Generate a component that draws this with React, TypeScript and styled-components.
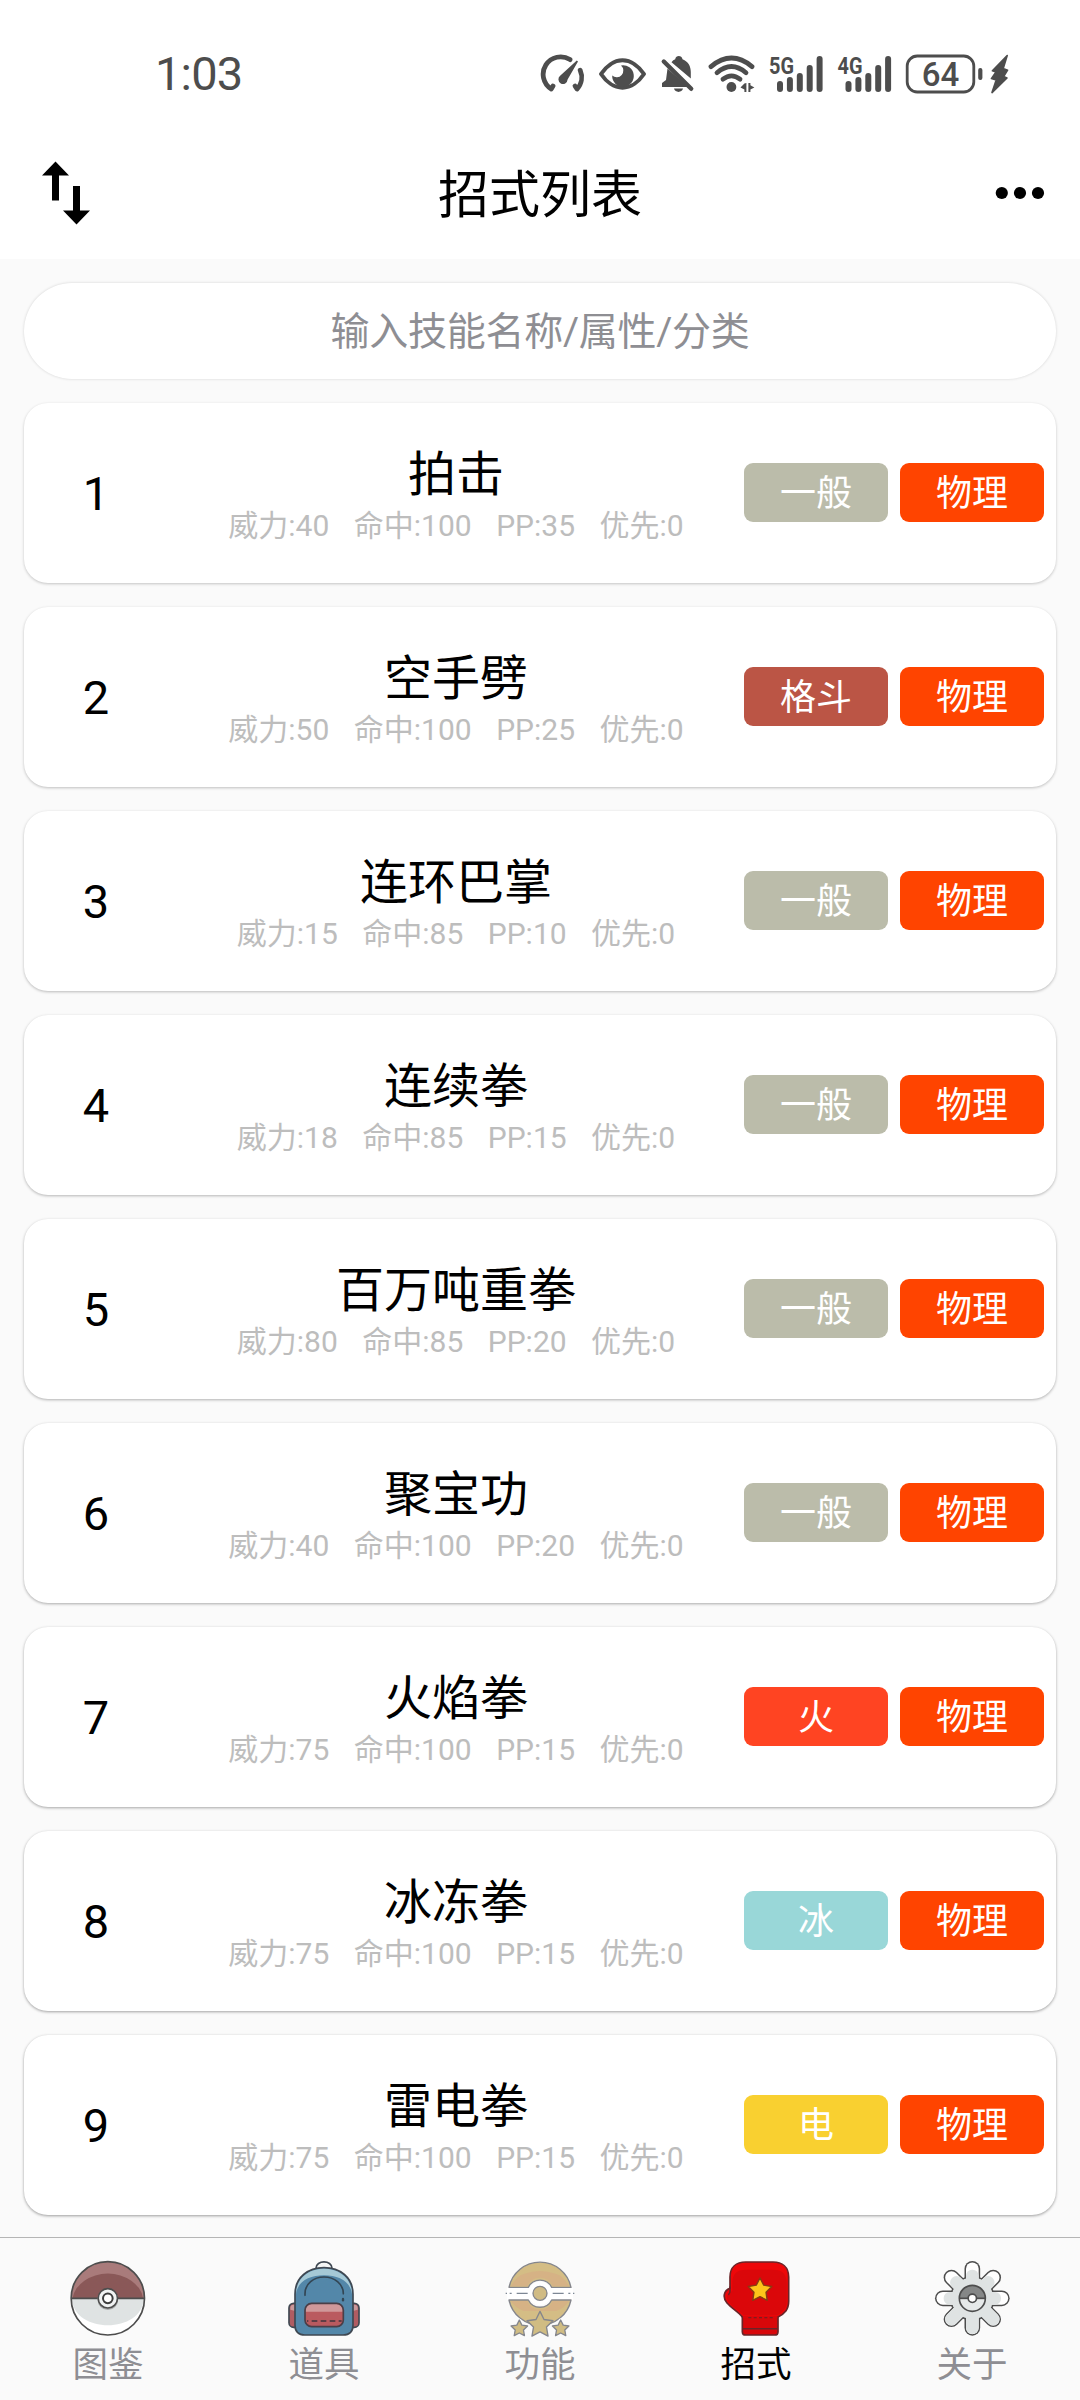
import React from 'react';
import styled, { createGlobalStyle } from 'styled-components';

const GlobalStyle = createGlobalStyle`
  *, *::before, *::after { box-sizing: border-box; }
  body {
    margin: 0;
    background: #fafafa;
    font-family: Roboto, "Noto Sans CJK SC", sans-serif;
    color: #000;
  }
`;

const Screen = styled.div`
  width: 1080px;
  height: 2400px;
  display: flex;
  flex-direction: column;
  background: #fafafa;
  overflow: hidden;
`;

const Header = styled.header`
  height: 259px;
  flex: none;
  display: flex;
  flex-direction: column;
  background: #fff;
`;

const StatusBar = styled.div`
  height: 127px;
  padding: 20px 70px 0 155px;
  display: flex;
  align-items: center;
  justify-content: space-between;
  color: #4d4d4d;
`;

const Clock = styled.span`
  font-size: 47px;
  line-height: 50px;
  letter-spacing: -0.8px;
`;

const StatusIcons = styled.svg`
  display: block;
  width: 470px;
  height: 44px;
`;

const TitleBar = styled.div`
  height: 132px;
  display: grid;
  grid-template-columns: 1fr auto 1fr;
  align-items: center;
  padding: 0 34px 0 34px;
`;

const IconButton = styled.button<{ $align: 'start' | 'end' }>`
  border: 0;
  padding: 0;
  background: none;
  display: flex;
  justify-self: ${(p) => p.$align};
`;

const PageTitle = styled.h1`
  margin: 5px 0 0;
  font-size: 51px;
  line-height: 60px;
  font-weight: 400;
`;

const Content = styled.main`
  flex: 1;
  min-height: 0;
  padding: 24px 24px 0;
  display: flex;
  flex-direction: column;
  gap: 24px;
`;

const SearchField = styled.div`
  height: 96px;
  flex: none;
  padding-top: 2px;
  border-radius: 48px;
  background: #fff;
  box-shadow: 0 0 3px rgba(0, 0, 0, 0.16);
  display: flex;
  align-items: center;
  justify-content: center;
  color: #8e8e93;
  font-size: 39px;
  line-height: 56px;
  letter-spacing: -0.25px;
`;

const Card = styled.article<{ $shade: number }>`
  height: 180px;
  flex: none;
  border-radius: 24px;
  background: #fff;
  box-shadow: 0 1px 3px rgba(0, 0, 0, ${(p) => p.$shade});
  display: grid;
  grid-template-columns: 144px 1fr 312px;
  align-items: center;
`;

const CardIndex = styled.span`
  padding-top: 2px;
  font-size: 47px;
  line-height: 56px;
  text-align: center;
`;

const MoveInfo = styled.div`
  padding-top: 8px;
  display: flex;
  flex-direction: column;
  align-items: center;
`;

const MoveName = styled.h2`
  margin: 0;
  font-size: 48px;
  line-height: 57px;
  font-weight: 400;
`;

const Stats = styled.div`
  display: flex;
  gap: 24.5px;
  color: #bdbdbd;
  font-size: 30px;
  line-height: 45px;
  white-space: nowrap;
`;

const Badges = styled.div`
  margin-bottom: 1px;
  display: flex;
  gap: 12px;
`;

const Badge = styled.span<{ $color: string }>`
  width: 144px;
  height: 59px;
  padding-top: 1px;
  border-radius: 9px;
  background: ${(p) => p.$color};
  color: #fff;
  font-size: 36px;
  line-height: 60px;
  text-align: center;
`;

const TabBar = styled.nav`
  height: 163px;
  flex: none;
  border-top: 1px solid #b5b5b5;
  background: #fafafa;
  display: grid;
  grid-template-columns: repeat(5, 1fr);
`;

const Tab = styled.div<{ $active?: boolean }>`
  padding-top: 23px;
  display: flex;
  flex-direction: column;
  align-items: center;
  color: ${(p) => (p.$active ? '#000' : '#8e8e93')};
  font-size: 35.5px;
  line-height: 58px;
`;

const TabIcon = styled.svg`
  display: block;
  width: 75px;
  height: 75px;
  overflow: visible;
`;

const starPoints = (cx: number, cy: number, r: number, inner = 0.5) =>
  Array.from({ length: 10 }, (_, i) => {
    const a = -Math.PI / 2 + (i * Math.PI) / 5;
    const d = i % 2 ? r * inner : r;
    return `${(cx + d * Math.cos(a)).toFixed(1)},${(cy + d * Math.sin(a)).toFixed(1)}`;
  }).join(' ');

const BAR_TOPS = [80, 76, 72, 64, 55];

function Signal({ x, label }: { x: number; label: string }) {
  return (
    <g>
      <text x={x - 11} y="73" fontSize="24" fontWeight="700" textLength="25" lengthAdjust="spacingAndGlyphs">
        {label}
      </text>
      {BAR_TOPS.map((top, i) => (
        <rect key={top} x={x - 3 + i * 9.9} y={top} width="6" height={91 - top} rx="3" />
      ))}
    </g>
  );
}

function SystemIcons() {
  return (
    <StatusIcons viewBox="540 51 470 44" fill="#4d4d4d" stroke="none" fontFamily="Roboto, sans-serif">
      <g fill="none" stroke="#4d4d4d" strokeWidth="4.8" strokeLinecap="round" strokeLinejoin="round">
        <path d="M570 58.6 A17.4 17.4 0 0 0 551.2 88 L553 85" />
        <path d="M580.2 69.2 A17.4 17.4 0 0 1 577 88 L575 85" />
      </g>
      <path d="M576.8 59.6 L578 60.4 L567.6 78.6 A4.6 4.6 0 1 1 560.4 74.6 Z" />
      <path
        d="M601 73 C606 65.5 614 59.3 622.5 59.3 C631 59.3 639 65.5 644 73 C639 80.5 631 86.7 622.5 86.7 C614 86.7 606 80.5 601 73 Z"
        fill="none"
        stroke="#4d4d4d"
        strokeWidth="4"
        strokeLinejoin="round"
      />
      <path d="M621 64.4 A10.8 10.8 0 1 1 612.2 74.6 A6.6 6.6 0 0 0 621 64.4 Z" />
      <path d="M667.5 67.5 L688 86 H662 V82 L666 79 Z" />
      <path d="M671.5 61.3 C672.5 59.5 674 58.6 675.2 58.2 C675.8 54 681.8 54 682.5 58.2 C688.3 60.8 690.8 65 690.8 71 V77.5 Z" />
      <path d="M663.8 60.5 L691.2 87.8" fill="none" stroke="#4d4d4d" strokeWidth="4.4" strokeLinecap="round" />
      <path d="M674 87.6 H683 C682 92 675 92 674 87.6 Z" />
      <g fill="none" stroke="#4d4d4d" strokeWidth="4.8" strokeLinecap="round">
        <path d="M711 65.6 Q731.5 48.6 752 65.6" />
        <path d="M717 71.8 Q731.5 59.4 746 71.8" />
        <path d="M723 78.2 Q731.5 71.6 740 78.2" />
      </g>
      <circle cx="731.4" cy="86" r="4.9" />
      <path d="M746.4 82 V91 H744.4 V88.4 L740.5 86.6 L744.4 82.6 Z M748.4 82 H750.4 V84.3 L754.4 86.6 L750.4 88.6 V91 H748.4 Z" />
      <Signal x={780} label="5G" />
      <Signal x={848.5} label="4G" />
      <rect x="907.2" y="55" width="66.6" height="36" rx="10" fill="none" stroke="#4d4d4d" strokeWidth="2.8" />
      <text x="940.5" y="84.8" fontSize="33" fontWeight="500" textAnchor="middle">
        64
      </text>
      <rect x="978.2" y="67" width="4.2" height="12" rx="2" />
      <path
        d="M1007.2 54.5 L992.4 69.8 L996 71 L991.4 77.6 L996.2 79 L992 91.6 L1007 77 L1003.6 75.6 L1007.6 69.2 L1003.2 67.6 Z"
        stroke="#4d4d4d"
        strokeWidth="1.6"
        strokeLinejoin="round"
      />
    </StatusIcons>
  );
}

function BallIcon() {
  return (
    <TabIcon viewBox="1.5 0 225 225">
      <circle cx="112" cy="112" r="110" fill="#fff" />
      <path d="M2 112 A110 110 0 0 1 222 112 Z" fill="#a97b7b" />
      <path d="M6 112 A107 86 0 0 1 218 112 Z" fill="#8a5858" />
      <path d="M4 112 H220 C216 220 8 220 4 112 Z" fill="#dfe3e3" />
      <path d="M2 112 H222" stroke="#4d4d4d" strokeWidth="5" />
      <circle cx="112" cy="112" r="110" fill="none" stroke="#4d4d4d" strokeWidth="5" />
      <circle cx="112" cy="116" r="31" fill="#a9abab" />
      <circle cx="112" cy="112" r="29" fill="#f1f3f3" stroke="#4d4d4d" strokeWidth="5" />
      <circle cx="112" cy="112" r="14.5" fill="#fff" stroke="#3d3d3d" strokeWidth="6" />
    </TabIcon>
  );
}

function BackpackIcon() {
  return (
    <TabIcon viewBox="0 0 225 225">
      <g stroke="#3f4852" strokeWidth="5" strokeLinecap="round" strokeLinejoin="round">
        <path d="M87 27 V22 C87 -4 135 -4 135 22 V27" fill="#f4f5f5" />
        <rect x="6" y="127" width="36" height="72" rx="14" fill="#b05c62" />
        <rect x="180" y="127" width="36" height="72" rx="14" fill="#b05c62" />
        <path d="M10 146 V141 Q10 131 20 131 H24 V150 Z M212 146 V141 Q212 131 202 131 H198 V150 Z" fill="#c9999b" stroke="none" />
        <path
          d="M24 100 C24 48 64 20 111 20 C158 20 198 48 198 100 V192 Q198 222 168 222 H54 Q24 222 24 192 Z"
          fill="#5387a9"
        />
      </g>
      <path
        d="M27 100 C27 50 66 23 111 23 C156 23 195 50 195 100 C190 60 154 43 111 43 C68 43 32 60 27 100 Z"
        fill="#a5c9d6"
      />
      <g fill="none" stroke="#334654" strokeWidth="5" strokeLinecap="round">
        <path d="M54 103 V98 C54 68 80 48 111 48 C142 48 169 68 169 98" />
        <path d="M168 114 V118" strokeWidth="7" />
      </g>
      <rect x="54" y="127" width="115" height="70" rx="20" fill="#ba5a5f" />
      <path d="M56 152 V147 Q56 129 74 129 H149 Q167 129 167 147 V152 Z" fill="#cf989a" />
      <path d="M60 180 H164" stroke="#40353e" strokeWidth="5" strokeDasharray="17 10" strokeDashoffset="-14" />
      <rect x="54" y="127" width="115" height="70" rx="20" fill="none" stroke="#4a3f48" strokeWidth="5" />
    </TabIcon>
  );
}

function TrophyIcon() {
  return (
    <TabIcon viewBox="0 0 225 225">
      <rect x="12" y="80" width="198" height="37" fill="#fff" />
      <g fill="#d4bd85" stroke="#85868c" strokeWidth="4" strokeLinejoin="round">
        <path d="M18 79 A95 95 0 0 1 204 79 H146 A39 39 0 0 0 76 79 Z" />
        <path d="M18 117 A95 95 0 0 0 204 117 H146 A39 39 0 0 1 76 117 Z" />
      </g>
      <path d="M24 76 Q40 44 64 38 Q110 22 158 38 Q182 44 198 76 H149 A41 41 0 0 0 73 76 Z" fill="#d6b285" />
      <path d="M24 120 H73 A41 41 0 0 0 149 120 H198 Q186 140 160 150 H62 Q36 140 24 120 Z" fill="#d6b285" />
      <circle cx="111" cy="97" r="35" fill="#fff" />
      <circle cx="111" cy="97" r="21" fill="#d0bb84" stroke="#85868c" strokeWidth="4" />
      <g stroke="#7d8795" strokeWidth="4">
        <path d="M41 97 H74 M149 97 H182" />
        <path d="M8 97 H12 M20 97 H26 M196 97 H202 M210 97 H214" strokeWidth="3.5" />
      </g>
      <g strokeLinejoin="round">
        <g fill="#fff" stroke="#fafafa" strokeWidth="14">
          <polygon points={starPoints(49, 204, 24)} />
          <polygon points={starPoints(173, 204, 24)} />
        </g>
        <g fill="#d0bc83" stroke="#85868c" strokeWidth="4">
          <polygon points={starPoints(111, 192, 41)} />
          <polygon points={starPoints(49, 203, 26)} />
          <polygon points={starPoints(173, 203, 26)} />
        </g>
      </g>
    </TabIcon>
  );
}

function GloveIcon() {
  return (
    <TabIcon viewBox="0 0 225 225">
      <g stroke="#6b2428" strokeWidth="5" strokeLinejoin="round">
        <path d="M70 158 H177 V212 Q177 222 167 222 H80 Q70 222 70 212 Z" fill="#d8070a" />
        <path
          d="M33 82 V48 C33 18 52 3 80 3 H162 C190 3 209 18 209 48 V120 C209 146 197 158 177 168 H70 C58 152 38 142 24 126 C10 110 14 88 33 82 Z"
          fill="#ee0709"
        />
      </g>
      <path
        d="M40 62 C42 34 58 26 84 26 H160 C186 26 200 34 203 62 V120 C203 144 190 154 175 162 H74 C60 148 42 138 28 122 C20 110 24 96 40 90 Z"
        fill="#db070a"
      />
      <path d="M33 78 V90 Q33 97 29 100" fill="none" stroke="#6b2428" strokeWidth="4.5" strokeLinecap="round" />
      <path d="M72 168 H175" stroke="#db070a" strokeWidth="7" />
      <path d="M88 170 H162" stroke="#7d1c20" strokeWidth="4" strokeDasharray="9 7" />
      <path d="M70 203 H177" stroke="#6b2428" strokeWidth="4.5" />
      <polygon
        points={starPoints(123, 88, 37, 0.52)}
        fill="#fdc41a"
        stroke="#8a3a12"
        strokeWidth="4.5"
        strokeLinejoin="round"
      />
    </TabIcon>
  );
}

const PETALS = [0, 45, 90, 135];

function GearIcon() {
  return (
    <TabIcon viewBox="0 0 225 225">
      <g fill="#4d4d4d">
        {PETALS.map((a) => (
          <rect key={a} x="88.5" y="0" width="47" height="224" rx="23.5" transform={`rotate(${a} 112 112)`} />
        ))}
        <circle cx="112" cy="112" r="67" />
      </g>
      <g fill="#fff">
        {PETALS.map((a) => (
          <rect key={a} x="93" y="4.5" width="38" height="215" rx="19" transform={`rotate(${a} 112 112)`} />
        ))}
      </g>
      <g fill="#dfe3e3">
        <circle cx="112" cy="112" r="62.5" />
        {[0, 45, 90, 135, 180, 225, 270, 315].map((a) => (
          <rect
            key={a}
            x="93"
            y={a > 90 && a < 270 ? 5 : 26}
            width="38"
            height="70"
            rx="18"
            transform={`rotate(${a} 112 112)`}
          />
        ))}
      </g>
      <circle cx="112" cy="112" r="39" fill="#e6e9e9" />
      <path d="M73 112 A39 39 0 0 1 151 112 Z" fill="#858787" />
      <path d="M73 112 H151" stroke="#4d4d4d" strokeWidth="5" />
      <circle cx="112" cy="112" r="39" fill="none" stroke="#4d4d4d" strokeWidth="5" />
      <circle cx="112" cy="112" r="12.5" fill="#fff" stroke="#4d4d4d" strokeWidth="5" />
    </TabIcon>
  );
}

const TYPE_COLORS: Record<string, string> = {
  一般: '#bbbcaa',
  格斗: '#bb5545',
  火: '#ff4422',
  冰: '#99d7d8',
  电: '#f9d030',
  物理: '#ff4400',
};

interface Move {
  name: string;
  power: number;
  accuracy: number;
  pp: number;
  type: string;
}

const MOVES: Move[] = [
  { name: '拍击', power: 40, accuracy: 100, pp: 35, type: '一般' },
  { name: '空手劈', power: 50, accuracy: 100, pp: 25, type: '格斗' },
  { name: '连环巴掌', power: 15, accuracy: 85, pp: 10, type: '一般' },
  { name: '连续拳', power: 18, accuracy: 85, pp: 15, type: '一般' },
  { name: '百万吨重拳', power: 80, accuracy: 85, pp: 20, type: '一般' },
  { name: '聚宝功', power: 40, accuracy: 100, pp: 20, type: '一般' },
  { name: '火焰拳', power: 75, accuracy: 100, pp: 15, type: '火' },
  { name: '冰冻拳', power: 75, accuracy: 100, pp: 15, type: '冰' },
  { name: '雷电拳', power: 75, accuracy: 100, pp: 15, type: '电' },
];

const TABS = [
  { label: '图鉴', Icon: BallIcon },
  { label: '道具', Icon: BackpackIcon },
  { label: '功能', Icon: TrophyIcon },
  { label: '招式', Icon: GloveIcon },
  { label: '关于', Icon: GearIcon },
];

function MoveCard({ move, position }: { move: Move; position: number }) {
  return (
    <Card $shade={0.2 + position * 0.02}>
      <CardIndex>{position}</CardIndex>
      <MoveInfo>
        <MoveName>{move.name}</MoveName>
        <Stats>
          <span>威力:{move.power}</span>
          <span>命中:{move.accuracy}</span>
          <span>PP:{move.pp}</span>
          <span>优先:0</span>
        </Stats>
      </MoveInfo>
      <Badges>
        <Badge $color={TYPE_COLORS[move.type]}>{move.type}</Badge>
        <Badge $color={TYPE_COLORS['物理']}>物理</Badge>
      </Badges>
    </Card>
  );
}

export default function App() {
  return (
    <>
      <GlobalStyle />
      <Screen>
        <Header>
          <StatusBar>
            <Clock>1:03</Clock>
            <SystemIcons />
          </StatusBar>
          <TitleBar>
            <IconButton $align="start" aria-label="sort">
              <svg width="58" height="64" viewBox="34 161 58 64">
                <path d="M55.5 161.5 L69 175.5 H59 V200.5 H52 V175.5 H42 Z M73 186 H80 V210.5 H90 L76.5 224.5 L63 210.5 H73 Z" />
              </svg>
            </IconButton>
            <PageTitle>招式列表</PageTitle>
            <IconButton $align="end" aria-label="more">
              <svg width="52" height="14" viewBox="994 186 52 14">
                <circle cx="1001.8" cy="193" r="6.1" />
                <circle cx="1020" cy="193" r="6.1" />
                <circle cx="1038" cy="193" r="6.1" />
              </svg>
            </IconButton>
          </TitleBar>
        </Header>
        <Content>
          <SearchField>输入技能名称/属性/分类</SearchField>
          {MOVES.map((move, i) => (
            <MoveCard key={move.name} move={move} position={i + 1} />
          ))}
        </Content>
        <TabBar>
          {TABS.map(({ label, Icon }) => (
            <Tab key={label} $active={label === '招式'}>
              <Icon />
              <span>{label}</span>
            </Tab>
          ))}
        </TabBar>
      </Screen>
    </>
  );
}
